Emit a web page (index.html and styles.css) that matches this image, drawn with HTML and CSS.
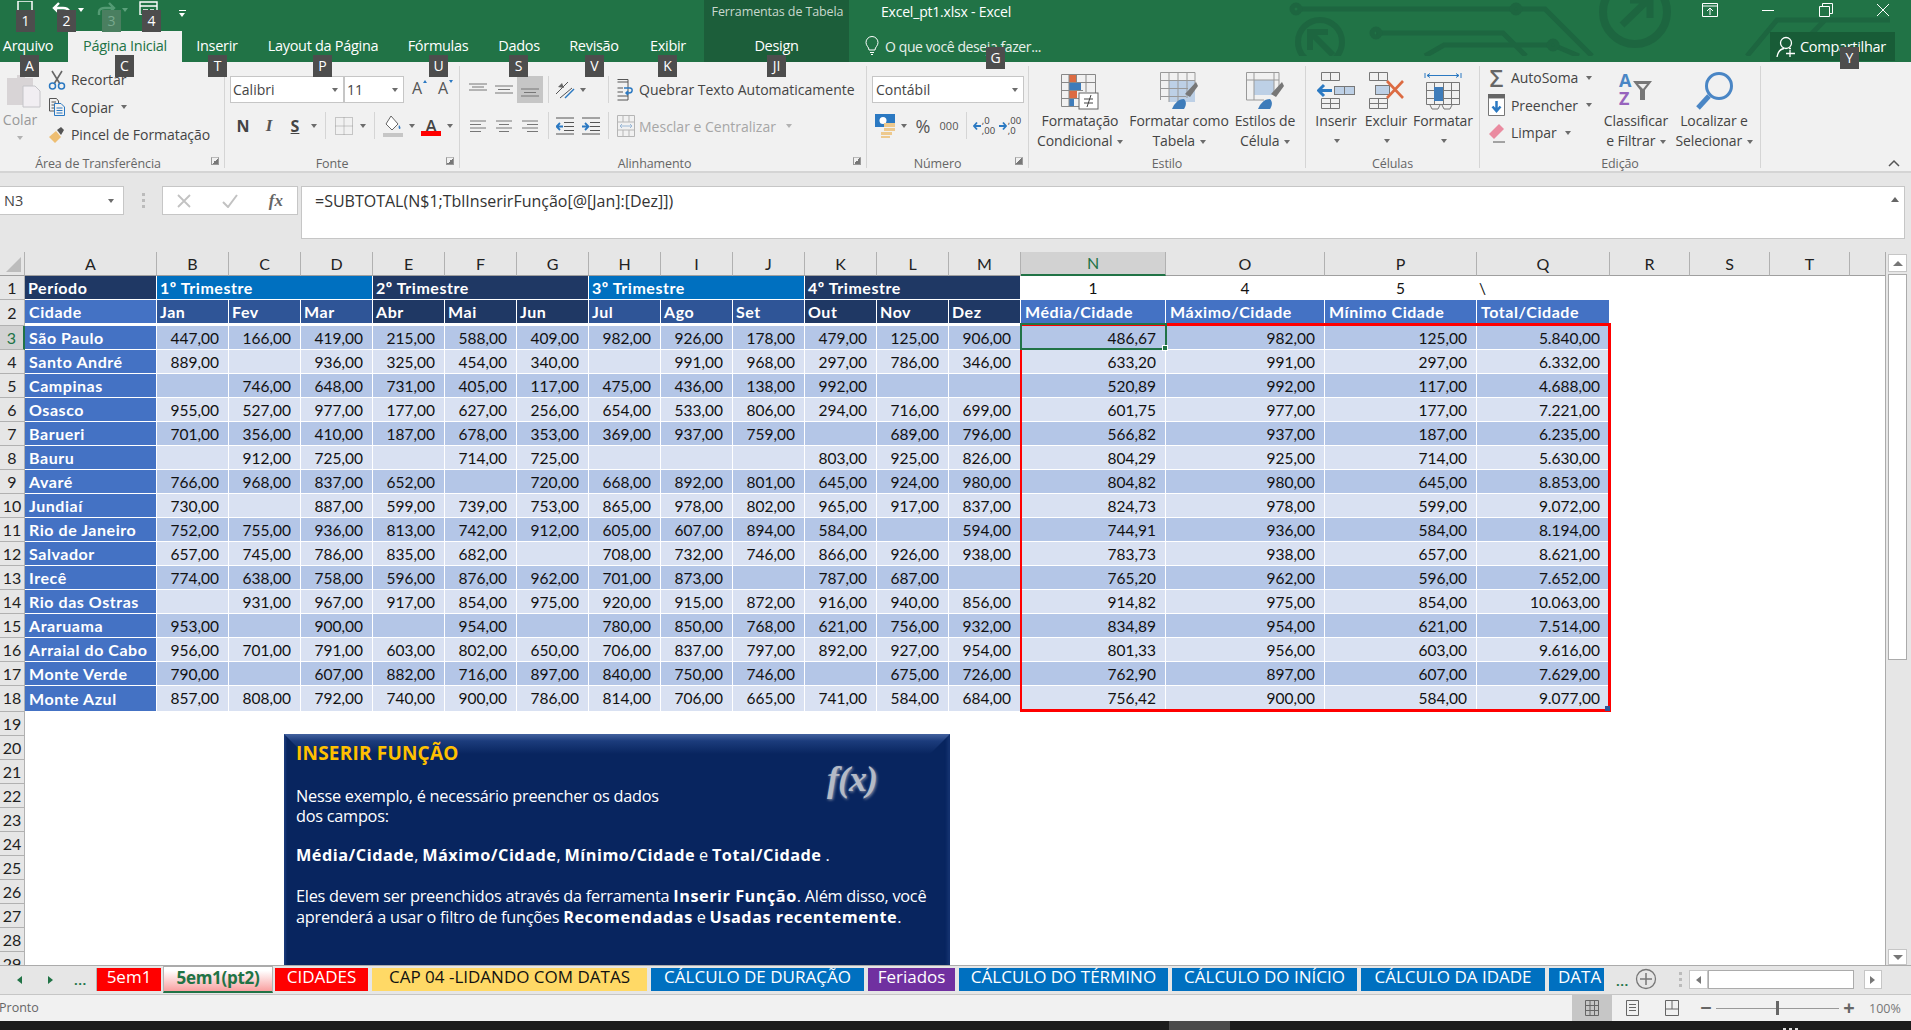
FILE: index.html
```html
<!DOCTYPE html>
<html lang="pt-BR">
<head>
<meta charset="utf-8">
<title>Excel_pt1.xlsx - Excel</title>
<link rel="stylesheet" href="styles.css">
</head>
<body>
<div class="app">

<header class="top">
  <svg class="circuit" width="661" height="56" viewBox="0 0 661 56" fill="none" stroke="#1d6640" stroke-width="5">
    <path d="M50 9H295L342 56M126 33H253L276 56M175 56L194 45H303L329 56M497 56L527 20H640M540 56L575 20"/>
    <circle cx="46" cy="9" r="4"/><circle cx="266" cy="9" r="4"/><circle cx="126" cy="33" r="4"/><circle cx="303" cy="45" r="4"/>
    <circle cx="385" cy="12" r="32" stroke-width="8"/><path d="M372 25L398 0M380 0H400V18" stroke-width="7"/>
    <circle cx="70" cy="42" r="22" stroke-width="6"/><path d="M83 55L62 34M60 50V32H78" stroke-width="6"/>
  </svg>
  <div class="qat">
    <svg class="qi qi-save" width="16" height="14" viewBox="0 0 16 14" fill="none" stroke="#fff" stroke-width="1.5"><path d="M1 0H15V14H1Z"/></svg>
    <svg class="qi qi-undo" width="20" height="14" viewBox="0 0 20 14" fill="none" stroke="#fff" stroke-width="2.4"><path d="M17 13V10C17 7 14 6 11 6H3M7 1L2 6L7 11"/></svg>
    <span class="car car-w"></span>
    <svg class="qi qi-redo" width="20" height="14" viewBox="0 0 20 14" fill="none" stroke="#549b74" stroke-width="2.4"><path d="M3 13V10C3 7 6 6 9 6H17M13 1L18 6L13 11"/></svg>
    <span class="car car-d"></span>
    <svg class="qi qi-form" width="19" height="14" viewBox="0 0 19 14" fill="none" stroke="#fff" stroke-width="1.4"><path d="M1 1H18V14H1ZM1 5H18M4 9H9M11 9H15"/></svg>
    <span class="qdrop"></span>
    <span class="ctx-title">Ferramentas de Tabela</span>
    <span class="doc-title">Excel_pt1.xlsx - Excel</span>
    <div class="winbtns">
      <svg width="16" height="14" viewBox="0 0 16 14" fill="none" stroke="#fff"><path d="M.5.5H15.5V13.5H.5ZM.5 3H15.5M8 12V5M5 8L8 5L11 8"/></svg>
      <svg width="14" height="14" viewBox="0 0 14 14" stroke="#fff"><path d="M1 7.5H13"/></svg>
      <svg width="14" height="14" viewBox="0 0 14 14" fill="none" stroke="#fff"><path d="M.5 3.5H10.5V13.5H.5ZM3.5 3.5V.5H13.5V10.5H10.5"/></svg>
      <svg width="14" height="14" viewBox="0 0 14 14" stroke="#fff"><path d="M1 1L13 13M13 1L1 13"/></svg>
    </div>
  </div>
  <nav class="tabs">
    <span class="tab t-arq">Arquivo</span>
    <span class="tab t-home">Página Inicial</span>
    <span class="tab t-ins">Inserir</span>
    <span class="tab t-lay">Layout da Página</span>
    <span class="tab t-for">Fórmulas</span>
    <span class="tab t-dad">Dados</span>
    <span class="tab t-rev">Revisão</span>
    <span class="tab t-exi">Exibir</span>
    <span class="tab t-des">Design</span>
    <span class="tell">
      <svg width="14" height="20" viewBox="0 0 14 20" fill="none" stroke="#fff"><path d="M4 14C4 11 1 10 1 6.500A6 6 0 0 1 13 6.500C13 10 10 11 10 14ZM5 16.500H9M6 18.500H8"/></svg>
      O que você deseja fazer...
    </span>
    <span class="share">
      <svg width="24" height="22" viewBox="0 0 24 22" fill="none" stroke="#fff" stroke-width="1.300"><circle cx="10" cy="7" r="5.500"/><path d="M1 21C2 15 5 13 8 12.500M13 12.500H15M14 21V14M10 17.500H19"/></svg>
      Compartilhar
    </span>
  </nav>
  <div class="ctx-bg"></div>
</header>

<section class="ribbon">
  <div class="grp g-clip">
    <div class="gbody">
      <div class="paste">
        <svg width="36" height="37" viewBox="0 0 36 37"><path d="M2 5H12V2H20V5H28V32H2Z" fill="#d8d4d6"/><path d="M18 13H30L35 18V34H18Z" fill="#f1eef2" stroke="#c4c4c8"/></svg>
        <span class="paste-t">Colar</span>
        <span class="car car-l"></span>
      </div>
      <div class="list">
        <div class="li"><svg width="18" height="20" viewBox="0 0 18 20" fill="none"><path d="M4 1L12 14M14 1L6 14" stroke="#666" stroke-width="1.600"/><circle cx="4.500" cy="16" r="3" stroke="#2b79c2" stroke-width="1.500"/><circle cx="13.500" cy="16" r="3" stroke="#2b79c2" stroke-width="1.500"/></svg>Recortar</div>
        <div class="li"><svg width="18" height="20" viewBox="0 0 18 20" fill="none" stroke="#555"><path d="M1.500 1.500H8.500L10.500 4V14H1.500ZM3.500 5H8M3.500 8H8M3.500 11H6"/><path d="M6.500 6.500H13L16.500 10V18.500H6.500Z" fill="#f1f1f1" stroke="#2b79c2"/><path d="M8.500 11H14.500M8.500 13.500H14.500M8.500 16H14.500" stroke="#2b79c2"/></svg>Copiar <span class="car car-g"></span></div>
        <div class="li"><svg width="18" height="20" viewBox="0 0 18 20"><path d="M1 12L8 6L13 12L7 18Z" fill="#eebe72"/><path d="M9 5L13 2L16 5L13 10Z" fill="#555"/></svg>Pincel de Formatação</div>
      </div>
    </div>
    <div class="glabel l-clip">Área de Transferência</div><span class="launch"></span>
  </div>

  <div class="grp g-font">
    <div class="gbody col">
      <div class="rw r1">
        <span class="combo c-font">Calibri<span class="car car-g"></span></span>
        <span class="combo c-size">11<span class="car car-g"></span></span>
        <span class="ic grow">A<i class="up"></i></span>
        <span class="ic shrink">A<i class="dn"></i></span>
      </div>
      <div class="rw r2">
        <span class="ic b-n">N</span>
        <span class="ic b-i">I</span>
        <span class="ic b-s">S</span><span class="cd"><span class="car car-g"></span></span>
        <span class="vs"></span>
        <span class="ic"><svg width="18" height="18" viewBox="0 0 18 18" fill="none" stroke="#999" stroke-dasharray="1 1"><path d="M.5.5H17.500V17.500H.5ZM9 .5V17.500M.5 9H17.500"/></svg></span><span class="cd"><span class="car car-g"></span></span>
        <span class="vs"></span>
        <span class="ic"><svg width="20" height="22" viewBox="0 0 20 22"><path d="M8 1L15 9L9 15L3 9Z" fill="#fff" stroke="#666"/><path d="M16 10C17.500 12 18 13 17 14C16 14.500 15 13 16 10Z" fill="#3b7ec0"/><rect y="18" width="20" height="4" fill="#c6c6c6"/></svg></span><span class="cd"><span class="car car-g"></span></span>
        <span class="ic fcolor">A</span><span class="cd"><span class="car car-g"></span></span>
      </div>
    </div>
    <div class="glabel l-font">Fonte</div><span class="launch"></span>
  </div>

  <div class="grp g-align">
    <div class="gbody col">
      <div class="rw r1">
        <span class="ic"><svg class="lines" width="18" height="14" viewBox="0 0 18 14"><path d="M0 1H18M3 4H15M0 7H18"/></svg></span>
        <span class="ic"><svg class="lines" width="18" height="14" viewBox="0 0 18 14"><path d="M0 3H18M3 6.500H15M0 10H18"/></svg></span>
        <span class="ic on"><svg class="lines" width="18" height="14" viewBox="0 0 18 14"><path d="M0 6H18M3 9.500H15M0 13H18"/></svg></span>
        <span class="vs v1"></span>
        <span class="ic"><svg width="20" height="20" viewBox="0 0 20 20" fill="none"><path d="M1 14L13 2M5 18L17 8" stroke="#555"/><path d="M10 18L19 9" stroke="#2b79c2" stroke-width="1.500"/><path d="M3 7L7 3L9 8Z" fill="#666"/></svg></span><span class="cd cdl"><span class="car car-g"></span></span>
        <span class="vs v2"></span>
        <svg class="wrapi" width="16" height="22" viewBox="0 0 16 22" fill="none" stroke="#555"><path d="M.5 3H11M.5 9H6M.5 13H6M.5 17H11M.5.5H11V21H.5"/><path d="M7 9H13C16 9 16 14 12 14H9M11 12L9 14L11 16" stroke="#2b79c2" stroke-width="1.500"/></svg>
        <span class="wrapt">Quebrar Texto Automaticamente</span>
      </div>
      <div class="rw r2">
        <span class="ic"><svg class="lines" width="16" height="14" viewBox="0 0 16 14"><path d="M0 2H16M0 5.500H11M0 9H16M0 12.500H11"/></svg></span>
        <span class="ic"><svg class="lines" width="16" height="14" viewBox="0 0 16 14"><path d="M0 2H16M3 5.500H13M0 9H16M3 12.500H13"/></svg></span>
        <span class="ic"><svg class="lines" width="16" height="14" viewBox="0 0 16 14"><path d="M0 2H16M5 5.500H16M0 9H16M5 12.500H16"/></svg></span>
        <span class="vs v1"></span>
        <span class="ic"><svg width="18" height="18" viewBox="0 0 18 18" fill="none" stroke="#555"><path d="M0 1H18M8 5.500H18M8 9.500H18M8 13.500H18M0 17H18"/><path d="M1 9.500H7M4 6L.5 9.500L4 13" stroke="#2b79c2" stroke-width="1.800"/></svg></span>
        <span class="ic"><svg width="18" height="18" viewBox="0 0 18 18" fill="none" stroke="#555"><path d="M0 1H18M8 5.500H18M8 9.500H18M8 13.500H18M0 17H18"/><path d="M0 9.500H6M3 6L6.500 9.500L3 13" stroke="#2b79c2" stroke-width="1.800"/></svg></span>
        <span class="vs v3"></span>
        <svg class="wrapi" width="18" height="22" viewBox="0 0 18 22" fill="none" stroke="#b5b5b5"><path d="M.5.5H17.500V21.500H.5ZM.5 7H17.500M.5 15H17.500M6 .5V7M12 .5V7M6 15V21.500M12 15V21.500"/><path d="M3 11H15M5 9L3 11L5 13M13 9L15 11L13 13" stroke="#9bb8d6"/></svg>
        <span class="wrapt dim m-merge">Mesclar e Centralizar</span><span class="car car-l m-car"></span>
      </div>
    </div>
    <div class="glabel l-align">Alinhamento</div><span class="launch"></span>
  </div>

  <div class="grp g-num">
    <div class="gbody col">
      <div class="rw r1"><span class="combo c-num">Contábil<span class="car car-g"></span></span></div>
      <div class="rw r2">
        <span class="ic"><svg width="20" height="24" viewBox="0 0 20 24"><rect width="20" height="13" fill="#2b79c2"/><circle cx="8" cy="6.500" r="3.500" fill="#fff"/><rect x="9" y="9" width="11" height="4" fill="#edc98e"/><rect x="9" y="14" width="11" height="3" fill="#edc98e"/><rect x="6" y="18" width="11" height="3" fill="#edc98e"/><rect x="6" y="22" width="9" height="2" fill="#edc98e"/></svg></span><span class="cd"><span class="car car-g"></span></span>
        <span class="ic pct">%</span>
        <span class="ic mil">000</span>
        <span class="vs v4"></span>
        <span class="ic dec"><svg width="8" height="10" viewBox="0 0 8 10" fill="none" stroke="#2b79c2" stroke-width="1.800"><path d="M8 5H1M4 1.500L1 5L4 8.500"/></svg><span>,0<br>,00</span></span>
        <span class="ic dec"><svg width="8" height="10" viewBox="0 0 8 10" fill="none" stroke="#2b79c2" stroke-width="1.800"><path d="M0 5H7M4 1.500L7 5L4 8.500"/></svg><span>,00<br>,0</span></span>
      </div>
    </div>
    <div class="glabel l-num">Número</div><span class="launch"></span>
  </div>

  <div class="grp g-style">
    <div class="gbody">
      <div class="big w92">
        <svg width="38" height="38" viewBox="0 0 38 38" fill="none"><rect x="8" y="2" width="7" height="8" fill="#dc6b42"/><rect x="8" y="10" width="12" height="8" fill="#3e7cba"/><rect x="8" y="18" width="8" height="8" fill="#dc6b42"/><rect x="8" y="26" width="5" height="8" fill="#3e7cba"/><path d="M.5 2.500H34.500V24M.5 2.500V34.500H18M.5 10.500H34.500M.5 18.500H22M.5 26.500H18M8 2.500V34.500M15.500 2.500V10M25 2.500V20" stroke="#888"/><rect x="18" y="21" width="19" height="16" fill="#fff" stroke="#666"/><path d="M23 27H32M23 31H32M26 35L30 23" stroke="#444"/></svg>
        <span>Formatação</span><span>Condicional <i class="car car-g"></i></span>
      </div>
      <div class="big w106">
        <svg width="38" height="38" viewBox="0 0 38 38" fill="none"><rect x="9" y="8" width="26" height="22" fill="#bdd0e6"/><path d="M.5 .5H35M.5 .5V28M.5 8.500H35M.5 16.500H28M.5 24.500H26M9 .5V30M18 .5V30M27 .5V26M35 .5V12" stroke="#999"/><path d="M25 22L36 10L38 14L30 25Z" fill="#777"/><path d="M24 37H12C14 32 18 27 24 27C27 30 26 34 24 37Z" fill="#3e7cba"/></svg>
        <span>Formatar como</span><span>Tabela <i class="car car-g"></i></span>
      </div>
      <div class="big w66">
        <svg width="38" height="38" viewBox="0 0 38 38" fill="none"><rect x="8" y="8" width="20" height="15" fill="#bdd0e6"/><path d="M.5 .5H33V14M.5 .5V28H18M.5 8H33M8 .5V28M28 .5V20" stroke="#999"/><path d="M25 22L36 10L38 14L30 25Z" fill="#777"/><path d="M24 37H12C14 32 18 27 24 27C27 30 26 34 24 37Z" fill="#3e7cba"/></svg>
        <span>Estilos de</span><span>Célula <i class="car car-g"></i></span>
      </div>
    </div>
    <div class="glabel">Estilo</div>
  </div>

  <div class="grp g-cell">
    <div class="gbody">
      <div class="big w48">
        <svg width="38" height="38" viewBox="0 0 38 38" fill="none" stroke="#777"><path d="M4.500.5H22.500V8.500H4.500ZM13.500.5V8.500M4.500 26.500H22.500V36.500H4.500ZM13.500 26.500V36.500M4.500 31.500H22.500"/><rect x="17.500" y="14.500" width="20" height="8" fill="#bdd0e6"/><path d="M27.500 14.500V22.500"/><path d="M15 18.500H2M7 13L1.500 18.500L7 24" stroke="#2b79c2" stroke-width="3"/></svg>
        <span>Inserir</span><span class="sol"><i class="car car-g"></i></span>
      </div>
      <div class="big w52">
        <svg width="38" height="38" viewBox="0 0 38 38" fill="none" stroke="#777"><path d="M2.500.5H20.500V8.500H2.500ZM11.500.5V8.500M2.500 26.500H20.500V36.500H2.500ZM11.500 26.500V36.500M2.500 31.500H20.500"/><rect x="8.500" y="13.500" width="14" height="9" fill="#bdd0e6"/><path d="M20 9L36 26M36 9L20 26" stroke="#dc6b42" stroke-width="2.600"/></svg>
        <span>Excluir</span><span class="sol"><i class="car car-g"></i></span>
      </div>
      <div class="big w62">
        <svg width="38" height="38" viewBox="0 0 38 38" fill="none" stroke="#777"><path d="M1 1V6M37 1V6M3 3.500H35M3 3.500L6 1.500M3 3.500L6 5.500M35 3.500L32 1.500M35 3.500L32 5.500" stroke="#2b79c2"/><path d="M2.500 10.500H35.500V32.500H2.500ZM10.500 10.500V32.500M19.500 10.500V32.500M27.500 10.500V32.500M2.500 18.500H35.500M2.500 26.500H35.500M6 33L8 37H14L16 33M18 33L20 37H26L28 33"/><rect x="10" y="15" width="9" height="14" fill="#3e7cba" stroke="none"/></svg>
        <span>Formatar</span><span class="sol"><i class="car car-g"></i></span>
      </div>
    </div>
    <div class="glabel">Células</div>
  </div>

  <div class="grp g-edit">
    <div class="gbody">
      <div class="list elist">
        <div class="li"><span class="sigma">Σ</span>AutoSoma <span class="car car-g"></span></div>
        <div class="li"><svg width="17" height="22" viewBox="0 0 17 22" fill="none"><path d="M.5 4H16.500V21.500H.5Z" fill="#fff" stroke="#777"/><rect width="17" height="4" fill="#666"/><path d="M8.500 7V16M4.500 12.500L8.500 17L12.500 12.500" stroke="#2b79c2" stroke-width="2.500"/></svg>Preencher <span class="car car-g"></span></div>
        <div class="li"><svg width="17" height="22" viewBox="0 0 17 22"><path d="M1 12L11 2L16 7L6 17Z" fill="#ea8ba0"/><path d="M5 20H17" stroke="#555"/></svg>Limpar <span class="car car-g"></span></div>
      </div>
      <div class="big w74">
        <svg width="38" height="38" viewBox="0 0 38 38"><text x="2" y="15" class="az a">A</text><text x="2" y="33" class="az z">Z</text><path d="M16 9H35L28 18V28H23V18Z" fill="#777"/><path d="M21 12H30L26 17Z" fill="#eee"/></svg>
        <span>Classificar</span><span>e Filtrar <i class="car car-g"></i></span>
      </div>
      <div class="big w82">
        <svg width="38" height="38" viewBox="0 0 38 38" fill="none" stroke="#4a86c5"><circle cx="24" cy="14" r="12.500" stroke-width="3"/><path d="M14 24L3 36" stroke-width="5"/></svg>
        <span>Localizar e</span><span>Selecionar <i class="car car-g"></i></span>
      </div>
    </div>
    <div class="glabel">Edição</div>
  </div>
  <div class="g-end"><svg width="12" height="8" viewBox="0 0 12 8" fill="none" stroke="#555" stroke-width="1.500"><path d="M1 7L6 2L11 7"/></svg></div>
</section>

<section class="fbar">
  <div class="namebox">N3<span class="car car-g"></span></div>
  <div class="fdots"></div>
  <div class="fxbox">
    <svg width="14" height="14" viewBox="0 0 14 14" stroke="#c2c2c2" stroke-width="1.800"><path d="M1 1L13 13M13 1L1 13"/></svg>
    <svg width="16" height="14" viewBox="0 0 16 14" fill="none" stroke="#c2c2c2" stroke-width="2"><path d="M1 8L6 13L15 1"/></svg>
    <span class="fx">fx</span>
  </div>
  <div class="formula">=SUBTOTAL(N$1;TblInserirFunção[@[Jan]:[Dez]])<i class="fup"></i></div>
</section>

<section class="sheet">
  <div class="grid">
    <table class="xl">
      <colgroup><col class="c0"><col class="ca"><col class="cm"><col class="cm"><col class="cm"><col class="cm"><col class="cm"><col class="cm"><col class="cm"><col class="cm"><col class="cm"><col class="cm"><col class="cm"><col class="cm"><col class="cn"><col class="co"><col class="cp"><col class="cq"><col class="cr"><col class="cr"><col class="cr"><col></colgroup>
      <thead>
        <tr class="hd"><th class="corner"></th><th>A</th><th>B</th><th>C</th><th>D</th><th>E</th><th>F</th><th>G</th><th>H</th><th>I</th><th>J</th><th>K</th><th>L</th><th>M</th><th class="sel">N</th><th>O</th><th>P</th><th>Q</th><th>R</th><th>S</th><th>T</th><th></th></tr>
      </thead>
      <tbody>
        <tr class="r-1"><th>1</th><td class="navy lbl">Período</td><td class="bl lbl" colspan="3">1º Trimestre</td><td class="navy lbl" colspan="3">2º Trimestre</td><td class="bl lbl" colspan="3">3º Trimestre</td><td class="navy lbl" colspan="3">4º Trimestre</td><td class="ctr">1</td><td class="ctr">4</td><td class="ctr">5</td><td class="lft">\</td><td colspan="4"></td></tr>
        <tr class="r-2"><th>2</th><td class="city lbl">Cidade</td><td class="mid lbl">Jan</td><td class="mid lbl">Fev</td><td class="mid lbl">Mar</td><td class="navy lbl">Abr</td><td class="navy lbl">Mai</td><td class="navy lbl">Jun</td><td class="mid lbl">Jul</td><td class="mid lbl">Ago</td><td class="mid lbl">Set</td><td class="navy lbl">Out</td><td class="navy lbl">Nov</td><td class="navy lbl">Dez</td><td class="city lbl">Média/Cidade</td><td class="city lbl">Máximo/Cidade</td><td class="city lbl">Mínimo Cidade</td><td class="city lbl">Total/Cidade</td><td colspan="4"></td></tr>
        <tr class="d1"><th class="sel">3</th><td class="city lbl">São Paulo</td><td>447,00</td><td>166,00</td><td>419,00</td><td>215,00</td><td>588,00</td><td>409,00</td><td>982,00</td><td>926,00</td><td>178,00</td><td>479,00</td><td>125,00</td><td>906,00</td><td>486,67</td><td>982,00</td><td>125,00</td><td>5.840,00</td><td class="e" colspan="4"></td></tr>
        <tr class="d2"><th>4</th><td class="city lbl">Santo André</td><td>889,00</td><td></td><td>936,00</td><td>325,00</td><td>454,00</td><td>340,00</td><td></td><td>991,00</td><td>968,00</td><td>297,00</td><td>786,00</td><td>346,00</td><td>633,20</td><td>991,00</td><td>297,00</td><td>6.332,00</td><td class="e" colspan="4"></td></tr>
        <tr class="d1"><th>5</th><td class="city lbl">Campinas</td><td></td><td>746,00</td><td>648,00</td><td>731,00</td><td>405,00</td><td>117,00</td><td>475,00</td><td>436,00</td><td>138,00</td><td>992,00</td><td></td><td></td><td>520,89</td><td>992,00</td><td>117,00</td><td>4.688,00</td><td class="e" colspan="4"></td></tr>
        <tr class="d2"><th>6</th><td class="city lbl">Osasco</td><td>955,00</td><td>527,00</td><td>977,00</td><td>177,00</td><td>627,00</td><td>256,00</td><td>654,00</td><td>533,00</td><td>806,00</td><td>294,00</td><td>716,00</td><td>699,00</td><td>601,75</td><td>977,00</td><td>177,00</td><td>7.221,00</td><td class="e" colspan="4"></td></tr>
        <tr class="d1"><th>7</th><td class="city lbl">Barueri</td><td>701,00</td><td>356,00</td><td>410,00</td><td>187,00</td><td>678,00</td><td>353,00</td><td>369,00</td><td>937,00</td><td>759,00</td><td></td><td>689,00</td><td>796,00</td><td>566,82</td><td>937,00</td><td>187,00</td><td>6.235,00</td><td class="e" colspan="4"></td></tr>
        <tr class="d2"><th>8</th><td class="city lbl">Bauru</td><td></td><td>912,00</td><td>725,00</td><td></td><td>714,00</td><td>725,00</td><td></td><td></td><td></td><td>803,00</td><td>925,00</td><td>826,00</td><td>804,29</td><td>925,00</td><td>714,00</td><td>5.630,00</td><td class="e" colspan="4"></td></tr>
        <tr class="d1"><th>9</th><td class="city lbl">Avaré</td><td>766,00</td><td>968,00</td><td>837,00</td><td>652,00</td><td></td><td>720,00</td><td>668,00</td><td>892,00</td><td>801,00</td><td>645,00</td><td>924,00</td><td>980,00</td><td>804,82</td><td>980,00</td><td>645,00</td><td>8.853,00</td><td class="e" colspan="4"></td></tr>
        <tr class="d2"><th>10</th><td class="city lbl">Jundiaí</td><td>730,00</td><td></td><td>887,00</td><td>599,00</td><td>739,00</td><td>753,00</td><td>865,00</td><td>978,00</td><td>802,00</td><td>965,00</td><td>917,00</td><td>837,00</td><td>824,73</td><td>978,00</td><td>599,00</td><td>9.072,00</td><td class="e" colspan="4"></td></tr>
        <tr class="d1"><th>11</th><td class="city lbl">Rio de Janeiro</td><td>752,00</td><td>755,00</td><td>936,00</td><td>813,00</td><td>742,00</td><td>912,00</td><td>605,00</td><td>607,00</td><td>894,00</td><td>584,00</td><td></td><td>594,00</td><td>744,91</td><td>936,00</td><td>584,00</td><td>8.194,00</td><td class="e" colspan="4"></td></tr>
        <tr class="d2"><th>12</th><td class="city lbl">Salvador</td><td>657,00</td><td>745,00</td><td>786,00</td><td>835,00</td><td>682,00</td><td></td><td>708,00</td><td>732,00</td><td>746,00</td><td>866,00</td><td>926,00</td><td>938,00</td><td>783,73</td><td>938,00</td><td>657,00</td><td>8.621,00</td><td class="e" colspan="4"></td></tr>
        <tr class="d1"><th>13</th><td class="city lbl">Irecê</td><td>774,00</td><td>638,00</td><td>758,00</td><td>596,00</td><td>876,00</td><td>962,00</td><td>701,00</td><td>873,00</td><td></td><td>787,00</td><td>687,00</td><td></td><td>765,20</td><td>962,00</td><td>596,00</td><td>7.652,00</td><td class="e" colspan="4"></td></tr>
        <tr class="d2"><th>14</th><td class="city lbl">Rio das Ostras</td><td></td><td>931,00</td><td>967,00</td><td>917,00</td><td>854,00</td><td>975,00</td><td>920,00</td><td>915,00</td><td>872,00</td><td>916,00</td><td>940,00</td><td>856,00</td><td>914,82</td><td>975,00</td><td>854,00</td><td>10.063,00</td><td class="e" colspan="4"></td></tr>
        <tr class="d1"><th>15</th><td class="city lbl">Araruama</td><td>953,00</td><td></td><td>900,00</td><td></td><td>954,00</td><td></td><td>780,00</td><td>850,00</td><td>768,00</td><td>621,00</td><td>756,00</td><td>932,00</td><td>834,89</td><td>954,00</td><td>621,00</td><td>7.514,00</td><td class="e" colspan="4"></td></tr>
        <tr class="d2"><th>16</th><td class="city lbl">Arraial do Cabo</td><td>956,00</td><td>701,00</td><td>791,00</td><td>603,00</td><td>802,00</td><td>650,00</td><td>706,00</td><td>837,00</td><td>797,00</td><td>892,00</td><td>927,00</td><td>954,00</td><td>801,33</td><td>956,00</td><td>603,00</td><td>9.616,00</td><td class="e" colspan="4"></td></tr>
        <tr class="d1"><th>17</th><td class="city lbl">Monte Verde</td><td>790,00</td><td></td><td>607,00</td><td>882,00</td><td>716,00</td><td>897,00</td><td>840,00</td><td>750,00</td><td>746,00</td><td></td><td>675,00</td><td>726,00</td><td>762,90</td><td>897,00</td><td>607,00</td><td>7.629,00</td><td class="e" colspan="4"></td></tr>
        <tr class="d2 last"><th>18</th><td class="city lbl">Monte Azul</td><td>857,00</td><td>808,00</td><td>792,00</td><td>740,00</td><td>900,00</td><td>786,00</td><td>814,00</td><td>706,00</td><td>665,00</td><td>741,00</td><td>584,00</td><td>684,00</td><td>756,42</td><td>900,00</td><td>584,00</td><td>9.077,00</td><td class="e" colspan="4"></td></tr>
        <tr class="blank"><th>19</th><td colspan="21"></td></tr>
        <tr class="blank"><th>20</th><td colspan="21"></td></tr>
        <tr class="blank"><th>21</th><td colspan="21"></td></tr>
        <tr class="blank"><th>22</th><td colspan="21"></td></tr>
        <tr class="blank"><th>23</th><td colspan="21"></td></tr>
        <tr class="blank"><th>24</th><td colspan="21"></td></tr>
        <tr class="blank"><th>25</th><td colspan="21"></td></tr>
        <tr class="blank"><th>26</th><td colspan="21"></td></tr>
        <tr class="blank"><th>27</th><td colspan="21"></td></tr>
        <tr class="blank"><th>28</th><td colspan="21"></td></tr>
        <tr class="blank"><th>29</th><td colspan="21"></td></tr>
      </tbody>
    </table>
    <div class="redbox"><i class="rs"></i></div>
    <div class="active"><i class="handle"></i></div>
    <aside class="note">
      <h2>INSERIR FUNÇÃO</h2>
      <span class="fxmark">f(x)</span>
      <p>Nesse exemplo, é necessário preencher os dados<br>dos campos:</p>
      <p><b>Média/Cidade</b>, <b>Máximo/Cidade</b>, <b>Mínimo/Cidade</b> e <b>Total/Cidade</b> .</p>
      <p>Eles devem ser preenchidos através da ferramenta <b>Inserir Função</b>. Além disso, você<br>aprenderá a usar o filtro de funções <b>Recomendadas</b> e <b>Usadas recentemente</b>.</p>
      <i class="noteline"></i>
    </aside>
  </div>
  <div class="vscroll">
    <span class="sb-btn"><i class="tri-u"></i></span>
    <span class="sb-thumb"></span>
    <span class="sb-btn sb-dn"><i class="tri-d"></i></span>
  </div>
</section>

<section class="sheets">
  <div class="snav">
    <i class="tl"></i><i class="tr"></i><span class="sd">...</span>
  </div>
  <span class="st red w1">5em1</span>
  <span class="st cur">5em1(pt2)</span>
  <span class="st red w3">CIDADES</span>
  <span class="st yel w4">CAP 04 -LIDANDO COM DATAS</span>
  <span class="st blu w5">CÁLCULO DE DURAÇÃO</span>
  <span class="st pur w6">Feriados</span>
  <span class="st blu w7">CÁLCULO DO TÉRMINO</span>
  <span class="st blu w8">CÁLCULO DO INÍCIO</span>
  <span class="st blu w9">CÁLCULO DA IDADE</span>
  <span class="st blu w10">DATA</span>
  <span class="sd sd2">...</span>
  <svg class="plus" width="22" height="22" viewBox="0 0 22 22" fill="none" stroke="#777"><circle cx="11" cy="11" r="9.500" stroke-width="1.300"/><path d="M11 5V17M5 11H17" stroke-width="1.500"/></svg>
  <span class="hdots"></span>
  <div class="hscroll"><span class="hb"><i class="tl tg"></i></span><span class="hthumb"></span><span class="hb hb2"><i class="tr tg"></i></span></div>
</section>

<footer class="status">
  <span class="ready">Pronto</span>
  <div class="views">
    <span class="vw von"><svg width="14" height="18" viewBox="0 0 14 18" fill="none" stroke="#666"><path d="M.5 1.500H13.500V16.500H.5ZM.5 6.500H13.500M.5 11.500H13.500M5 1.500V16.500M9.500 1.500V16.500"/></svg></span>
    <span class="vw"><svg width="13" height="18" viewBox="0 0 13 18" fill="none" stroke="#666"><path d="M.5 1.500H12.500V16.500H.5ZM3 5.500H10M3 8.500H10M3 11.500H10"/></svg></span>
    <span class="vw"><svg width="14" height="18" viewBox="0 0 14 18" fill="none" stroke="#666"><path d="M.5 1.500H13.500V16.500H.5ZM7 1.500V10M.5 10H13.500"/></svg></span>
  </div>
  <span class="zm">−</span>
  <div class="slider"><i></i></div>
  <span class="zm zp">+</span>
  <span class="pctz">100%</span>
</footer>
<div class="taskbar"><i class="tk"></i><span class="tkclock"></span></div>

<span class="kt k1">1</span><span class="kt k2">2</span><span class="kt k3">3</span><span class="kt k4">4</span>
<span class="kt ka">A</span><span class="kt kc">C</span><span class="kt ktt">T</span><span class="kt kp">P</span><span class="kt ku">U</span><span class="kt ks">S</span><span class="kt kv">V</span><span class="kt kk">K</span><span class="kt kj">JI</span><span class="kt kg">G</span><span class="kt ky">Y</span>

</div>
</body>
</html>
```
FILE: styles.css
```css
*{box-sizing:border-box}
html,body{margin:0;padding:0;height:100%;overflow:hidden}
body{font-family:"Open Sans","Noto Sans",sans-serif;font-size:14px;color:#444;background:#1c1c1c}
i{font-style:normal}
.app{position:relative;width:1911px;height:1030px;overflow:hidden;display:flex;flex-direction:column}

/* title */
.top{height:62px;background:#217346;position:relative;flex:none;color:#fff}
.circuit{position:absolute;left:1250px;top:0}
.ctx-bg{position:absolute;left:704px;top:0;width:145px;height:62px;background:#1c5e3a}
.qat{position:relative;z-index:2;height:32px;display:flex;align-items:flex-start}
.qi{display:block;flex:none}
.qi-save{margin:1px 0 0 17px}
.qi-undo{margin:2px 0 0 19px}
.car{display:inline-block;width:0;height:0;border:3.500px solid transparent;border-bottom:0;border-top:4px solid #777;vertical-align:middle}
.car-w{border-top-color:#fff;margin:8px 0 0 6px}
.car-d{border-top-color:#5ca17b;margin:8px 0 0 6px}
.qi-redo{margin:2px 0 0 12px}
.qi-form{margin:1px 0 0 11px}
.car-l{border-top-color:#b2b2b2}
.car-g{border-top-color:#6c6c6c}
.qdrop{width:7px;height:7px;margin:10px 0 0 21px;border-top:1px solid #fff;position:relative}
.qdrop::after{content:"";position:absolute;left:0;top:2px;border:3.500px solid transparent;border-bottom:0;border-top:4px solid #fff}
.ctx-title{position:absolute;left:710px;top:3px;font-size:12.500px;color:#c8d8cd;white-space:nowrap;width:135px;text-align:center;letter-spacing:-.1px}
.doc-title{position:absolute;left:881px;top:2px;font-size:14px;white-space:nowrap;letter-spacing:-.2px}
.winbtns{position:absolute;left:1702px;top:3px;width:188px;display:flex;justify-content:space-between}
.winbtns svg{display:block}
.tabs{position:relative;z-index:2;height:30px;display:block;font-size:14.500px;margin-top:-1px}
.tab{position:absolute;top:0;height:31px;line-height:30px;white-space:nowrap;text-align:center;letter-spacing:-.3px}
.t-arq{left:0;width:56px}
.t-home{left:68px;width:114px;background:#f1f1f1;color:#217346}
.t-ins{left:190px;width:54px}
.t-lay{left:258px;width:130px}
.t-for{left:398px;width:80px}
.t-dad{left:490px;width:58px}
.t-rev{left:560px;width:68px}
.t-exi{left:640px;width:56px}
.t-des{left:704px;width:145px}
.tell{position:absolute;left:865px;top:0;height:30px;display:flex;align-items:center;gap:6px;font-size:14px;white-space:nowrap;letter-spacing:-.4px;color:#e8f0ea}
.share{position:absolute;left:1770px;top:1px;width:125px;height:29px;background:#185c37;display:flex;align-items:center;gap:0;padding-left:6px;font-size:14.500px;white-space:nowrap;letter-spacing:-.3px}

/* ribbon */
.ribbon{height:111px;flex:none;background:#f1f1f1;border-bottom:2px solid #d4d4d4;display:flex;padding-top:4px;position:relative}
.grp{position:relative;height:102px;border-right:1px solid #d5d5d5;flex:none}
.g-clip{width:225px}.g-font{width:235px}.g-align{width:407px}.g-num{width:162px}.g-style{width:277px}.g-cell{width:174px}.g-edit{width:281px}
.g-end{flex:1;display:flex;justify-content:flex-end;align-items:flex-end;padding:0 11px 4px 0}
.gbody{height:90px;display:flex;white-space:nowrap}
.gbody.col{flex-direction:column;padding-left:5px}
.glabel{height:12px;line-height:16px;text-align:center;font-size:12.500px;color:#666;letter-spacing:-.1px}
.l-clip{padding-right:28px}
.l-font{padding-right:20px}
.l-align{padding-right:17px}
.l-num{padding-right:20px}
.launch{position:absolute;right:5px;bottom:3px;width:8px;height:8px;border:1px solid #999;border-top-color:#bbb;background:linear-gradient(135deg,transparent 50%,#777 50%)}
.paste{width:40px;display:flex;flex-direction:column;align-items:center;padding-top:7px}
.paste svg{display:block;margin-left:6px}
.paste-t{line-height:20px;color:#999;font-size:14px}
.paste .car{margin-top:6px}
.list{padding:0 0 0 8px;flex:none}
.li{height:27.500px;display:flex;align-items:center;gap:5px;font-size:14px;letter-spacing:-.05px}
.li .car{margin-left:2px}
.rw{display:flex;align-items:stretch;height:27px}
.r1{margin-top:10px}
.r2{margin-top:9px}
.combo{position:relative;display:block;height:27px;background:#fff;border:1px solid #c6c6c6;line-height:25px;padding-left:2px;font-size:14px}
.combo .car{position:absolute;right:5px;top:11px}
.c-font{width:114px}.c-size{width:60px}.c-num{width:152px;padding-left:3px}
.ic{width:26px;flex:none;display:flex;align-items:center;justify-content:center}
.ic.on{background:#c6c6c6}
.cd{width:12px;flex:none;display:flex;align-items:center;justify-content:center}
.cdl{width:26px;justify-content:flex-start;padding-left:2px}
.vs{width:1px;flex:none;background:#d5d5d5;margin:0 5px}
.v1{margin:0 3px 0 5px}
.v2{margin:0 8px 0 4px}
.v3{margin:0 8px 0 4px}
.v4{margin:0 4px}
.grow,.shrink{position:relative;font-size:16px;color:#555;padding-bottom:3px}
.up,.dn{position:absolute;right:3px;top:4px;border:2.500px solid transparent}
.up{border-top:0;border-bottom:3px solid #2b79c2}
.dn{border-bottom:0;border-top:3px solid #2b79c2}
.b-n{font-weight:700;font-size:16px;color:#444}
.b-i{font-family:"Liberation Serif",serif;font-style:italic;font-weight:700;font-size:17px;color:#555}
.b-s{font-weight:700;font-size:16px;text-decoration:underline;color:#444}
.fcolor{font-size:17px;font-weight:600;color:#444;line-height:18px;position:relative}
.fcolor::after{content:"";position:absolute;left:3px;right:3px;bottom:3px;height:5px;background:#f00}
.lines{fill:none;stroke:#777}
.wrapi{display:block;align-self:center;flex:none}
.wrapt{line-height:27px;margin-left:6px;font-size:14px;color:#444}
.dim{color:#a6a6a6}
.m-merge{margin-left:4px;line-height:29px}
.m-car{align-self:center;margin-left:10px}
.pct{font-size:18px;color:#555}
.mil{font-size:11px;color:#555}
.dec{font-size:9.500px;line-height:10px;color:#444;gap:1px}
.big{flex:none;display:flex;flex-direction:column;align-items:center;padding-top:5.500px;line-height:20px;font-size:14px;white-space:nowrap;letter-spacing:-.1px}
.big svg{display:block;margin-bottom:1px}
.big .car{margin-left:1px}
.sol{line-height:18px}
.w92{width:92px;margin-left:5px}.w106{width:106px}.w66{width:66px}
.w48{width:48px;margin-left:6px}.w52{width:52px}.w62{width:62px}
.w74{width:74px}.w82{width:82px}
.elist{width:119px;padding-left:8px;flex:none;margin-top:-2px}
.elist .li{gap:6px}
.sigma{width:17px;text-align:center;font-size:24px;color:#666;font-weight:600;line-height:22px}
.az{font-family:"Open Sans",sans-serif;font-weight:700;font-size:18px}
.az.a{fill:#4a86c5}.az.z{fill:#9763bd}

/* formula bar */
.fbar{height:79px;flex:none;background:#e6e6e6;display:flex;align-items:flex-start;padding-top:13px}
.namebox{position:relative;width:124px;height:29px;background:#fff;border:1px solid #c6c6c6;border-left:0;line-height:27px;padding-left:4px;font-size:14.500px}
.namebox .car{position:absolute;right:9px;top:12px}
.fdots{width:3px;height:15px;margin:7px 17px 0 18px;background:repeating-linear-gradient(#bbb 0 3px,transparent 3px 6px)}
.fxbox{width:136px;height:29px;background:#fff;border:1px solid #c6c6c6;display:flex;align-items:center;justify-content:space-between;padding:0 14px}
.fx{font-family:"Liberation Serif",serif;font-style:italic;font-weight:700;font-size:17px;color:#666}
.formula{position:relative;width:1604px;height:53px;margin-left:3px;background:#fff;border:1px solid #c6c6c6;padding:3px 13px;font-size:16px;line-height:22px;color:#333}
.fup{position:absolute;right:5px;top:10px;border:4.500px solid transparent;border-top:0;border-bottom:5px solid #666}

/* sheet */
.sheet{height:713px;flex:none;background:#e6e6e6;display:flex}
.grid{position:relative;width:1886px;height:713px;overflow:hidden;flex:none;border-right:1px solid #ababab}
.xl{table-layout:fixed;width:1885px;border-collapse:separate;border-spacing:0;font-family:Lato,sans-serif;font-size:15.500px;color:#111}
.c0{width:25px}.ca{width:132px}.cm{width:72px}.cn{width:145px}.co{width:159px}.cp{width:152px}.cq{width:133px}.cr{width:80px}
.xl th{font-weight:400;background:#e6e6e6;border-right:1px solid #b1b1b1;border-bottom:1px solid #b1b1b1;padding:0;text-align:center;color:#222;font-size:16px}
.xl td{height:24px;padding:0 9px 0 0;text-align:right;background:#fff;border-right:1px solid #fff;border-bottom:1px solid #fff;white-space:nowrap;overflow:hidden}
.hd th{height:23px;border-bottom:1px solid #9f9f9f;line-height:22px}
.hd th:last-child{border-right:0}
.corner{background:#e6e6e6;position:relative}
.corner::after{content:"";position:absolute;right:3px;bottom:3px;border-left:15px solid transparent;border-bottom:15px solid #bcbcbc}
.hd th.sel{background:#d2d2d2;color:#217346;border-bottom:2px solid #217346}
tbody th.sel{background:#d2d2d2;color:#217346;border-right:2px solid #217346}
.r-1 td,.r-1 th{height:24px}
.r-2 td,.r-2 th{height:26px}
.r-2 td{border-bottom:3px solid #fff}
.xl td.lbl{text-align:left;font-weight:700;color:#fff;padding:0 0 0 3px;font-size:16px;letter-spacing:.55px}
.xl td.city{padding-left:4px;background:#4472c4}
.xl td.navy{background:#1f3864}
.xl td.bl{background:#0070c0}
.xl td.mid{background:#2f5597}
.xl td.ctr{text-align:center;padding:0}
.xl td.lft{text-align:left;padding:0 0 0 2px}
.d1 td{background:#b4c6e7}
.d2 td{background:#d9e1f2}
.xl td.e,.blank td{background:#fff;border-color:#fff}
.last td,.last th{height:26px;padding-bottom:2px}
.blank th,.blank td{height:24px}
.redbox{position:absolute;left:1020px;top:71px;width:591px;height:389px;border:3px solid #f00;border-left-width:2px;pointer-events:none}
.rs{position:absolute;right:-2px;bottom:-2px;width:5px;height:5px;background:#2f5597}
.active{position:absolute;left:1020px;top:71px;width:147px;height:27px;border:2px solid #217346}
.handle{position:absolute;right:-3px;bottom:-3px;width:6px;height:6px;background:#217346;border:1px solid #fff}
.note{position:absolute;left:284px;top:482px;width:666px;height:240px;background:#08255f;box-shadow:inset 2px 0 2px #1a3a7a,inset -3px 0 3px #143270;color:#fff;font-size:16.300px;line-height:20.300px;padding:8px 12px;letter-spacing:-.25px}
.note::before{content:"";position:absolute;left:0;top:0;right:0;height:20px;background:linear-gradient(#44629f,#1c3c7c 35%,#08255f);clip-path:polygon(0 0,100% 0,calc(100% - 20px) 100%,20px 100%)}
.note h2{position:relative;margin:0;height:44px;font-size:19px;line-height:22px;color:#ffc000;font-weight:700;letter-spacing:.2px}
.note p{position:relative;margin:0 0 21px}
.note p:first-of-type{margin-bottom:18.500px}
.note b{letter-spacing:.5px}
.fxmark{position:absolute;left:543px;top:25px;font-family:"Liberation Serif",serif;font-style:italic;font-weight:700;font-size:36px;line-height:40px;color:#b4bac6;text-shadow:1px 1px 3px #8a93a8;letter-spacing:-1px}
.noteline{position:absolute;left:36px;right:38px;bottom:0;height:1px;background:#fff}

/* scrollbar */
.vscroll{width:19px;margin-left:2px;display:flex;flex-direction:column;padding-top:2px;height:713px}
.sb-btn{display:flex;align-items:center;justify-content:center;width:19px;height:18px;background:#fff;border:1px solid #c6c6c6;flex:none}
.sb-thumb{width:19px;height:386px;margin-top:2px;background:#fff;border:1px solid #ababab;flex:none}
.sb-dn{margin-top:auto;height:16px}
.tri-u{border:5px solid transparent;border-top:0;border-bottom:5px solid #777}
.tri-d{border:5px solid transparent;border-bottom:0;border-top:5px solid #777}

/* sheet tabs */
.sheets{height:30px;flex:none;background:#e6e6e6;border-top:1px solid #ababab;border-bottom:1px solid #c6c6c6;display:flex;align-items:flex-start;padding-top:2px;font-size:17px}
.snav{width:97px;height:23px;display:flex;align-items:center;padding-left:17px;border-right:1px solid #b5b5b5;flex:none;margin-right:0}
.tl,.tr{display:block;border:4px solid transparent;border-left-width:0;border-right-width:0}
.tl{border-right:5px solid #217346}
.tr{border-left:5px solid #217346}
.snav .tl{margin-right:26px}
.sd{color:#217346;font-weight:700;font-size:13px;line-height:18px;margin-left:21px;letter-spacing:.5px}
.sd2{margin:4px 0 0 12px}
.st{flex:none;height:23px;line-height:17px;text-align:center;margin-right:4px;white-space:nowrap;color:#fff}
.red{background:#f00}.yel{background:#ffd966;color:#111}.blu{background:#0070c0}.pur{background:#7030a0}
.cur{width:110px;height:27px;margin:-2px 2px 0 2px;background:linear-gradient(#fff 15%,#f9a0a0);border:1px solid #b5b5b5;border-top-color:#ababab;border-bottom:2px solid #217346;color:#217346;font-weight:700;line-height:22px;letter-spacing:-.3px}
.w1{width:64px;margin-right:0}.w3{width:93px}.w4{width:275px}.w5{width:213px}.w6{width:87px}.w7{width:209px}.w8{width:185px}.w9{width:184px}.w10{width:55px;margin-right:0;text-align:left;padding-left:9px}
.plus{flex:none;margin:0 0 0 6px;display:block}
.hdots{width:3px;height:15px;margin:4px 0 0 22px;flex:none;background:repeating-linear-gradient(#bbb 0 3px,transparent 3px 6px)}
.hscroll{margin-left:7px;width:193px;height:19px;margin-top:2px;display:flex;flex:none}
.hb{width:19px;height:19px;background:#fff;border:1px solid #c6c6c6;display:flex;align-items:center;justify-content:center;flex:none}
.hb2{margin-left:10px;width:18px}
.tg.tl{border-right-color:#777}.tg.tr{border-left-color:#777}
.hthumb{width:146px;height:19px;background:#fff;border:1px solid #ababab;flex:none}

/* status */
.status{height:26px;flex:none;background:#f1f1f1;display:flex;align-items:center;font-size:12.500px;color:#666;position:relative}
.ready{width:1574px;flex:none;margin-left:-1px;margin-top:-2px}
.views{display:flex;height:26px;flex:none;margin-left:-1px}
.vw{width:40px;display:flex;align-items:center;justify-content:center}
.von{background:#c6c6c6}
.zm{width:16px;margin-left:6px;text-align:center;font-size:20px;font-weight:700;color:#666;line-height:20px;flex:none}
.slider{position:relative;width:123px;height:1px;background:#999;margin:0 2px;flex:none}
.slider i{position:absolute;left:60px;top:-7px;width:3px;height:14px;background:#666}
.zp{margin-left:0}
.pctz{margin-left:12px;flex:none;color:#777}
.taskbar{flex:1;background:#1c1c1c;position:relative}
.tk{position:absolute;left:1169px;top:0;width:61px;height:9px;background:#4b4b4b}
.tkclock{position:absolute;left:1783px;top:7px;width:16px;height:3px;background:repeating-linear-gradient(90deg,#ddd 0 3px,transparent 3px 6px)}

/* key tips */
.kt{position:absolute;z-index:9;width:19px;height:22px;background:#4d4d4d;color:#fff;font-size:14px;line-height:22px;text-align:center}
.k1,.k2,.k3,.k4{top:10px}
.k1{left:16px}.k2{left:57px}.k3{left:102px;background:#4a7f60;color:#78a98e}.k4{left:142px}
.ka,.kc,.ktt,.kp,.ku,.ks,.kv,.kk,.kj{top:55px}
.ka{left:20px}.kc{left:115px}.ktt{left:208px}.kp{left:313px}.ku{left:429px}.ks{left:509px}.kv{left:585px}.kk{left:658px}.kj{left:767px}
.kg{left:986px;top:47px}.ky{left:1840px;top:47px}
```
